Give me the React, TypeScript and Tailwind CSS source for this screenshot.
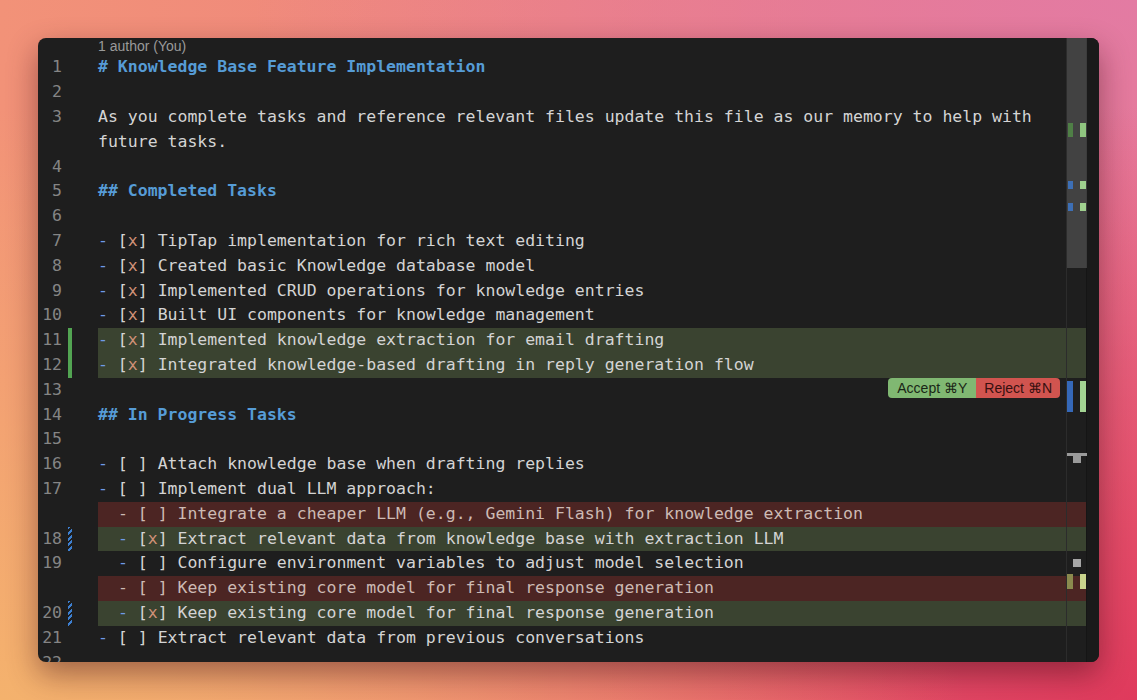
import type { ReactNode } from "react";

type Kind = "add" | "del" | undefined;

type Row = {
  n?: number;
  kind?: Kind;
  gutter?: "green" | "hatch";
  body?: ReactNode;
  actions?: boolean;
};

function Heading({ text }: { text: string }) {
  return <span className="font-bold text-[#569cd6]">{text}</span>;
}

function Task({
  text,
  done,
  indent = 0,
  removed,
}: {
  text: string;
  done?: boolean;
  indent?: number;
  removed?: boolean;
}) {
  const pad = " ".repeat(indent);
  if (removed) {
    return (
      <span className="text-[#cdbab4]">
        {pad}- [{done ? "x" : " "}] {text}
      </span>
    );
  }
  return (
    <span>
      {pad}
      <span className="text-[#6f9be8]">-</span> [
      {done ? <span className="text-[#ce9178]">x</span> : " "}] {text}
    </span>
  );
}

const rows: Row[] = [
  { n: 1, body: <Heading text="# Knowledge Base Feature Implementation" /> },
  { n: 2 },
  {
    n: 3,
    body: "As you complete tasks and reference relevant files update this file as our memory to help with",
  },
  { body: "future tasks." },
  { n: 4 },
  { n: 5, body: <Heading text="## Completed Tasks" /> },
  { n: 6 },
  { n: 7, body: <Task done text="TipTap implementation for rich text editing" /> },
  { n: 8, body: <Task done text="Created basic Knowledge database model" /> },
  { n: 9, body: <Task done text="Implemented CRUD operations for knowledge entries" /> },
  { n: 10, body: <Task done text="Built UI components for knowledge management" /> },
  {
    n: 11,
    kind: "add",
    gutter: "green",
    body: <Task done text="Implemented knowledge extraction for email drafting" />,
  },
  {
    n: 12,
    kind: "add",
    gutter: "green",
    body: <Task done text="Integrated knowledge-based drafting in reply generation flow" />,
  },
  { n: 13, actions: true },
  { n: 14, body: <Heading text="## In Progress Tasks" /> },
  { n: 15 },
  { n: 16, body: <Task text="Attach knowledge base when drafting replies" /> },
  { n: 17, body: <Task text="Implement dual LLM approach:" /> },
  {
    kind: "del",
    body: (
      <Task
        removed
        indent={2}
        text="Integrate a cheaper LLM (e.g., Gemini Flash) for knowledge extraction"
      />
    ),
  },
  {
    n: 18,
    kind: "add",
    gutter: "hatch",
    body: <Task done indent={2} text="Extract relevant data from knowledge base with extraction LLM" />,
  },
  {
    n: 19,
    body: <Task indent={2} text="Configure environment variables to adjust model selection" />,
  },
  {
    kind: "del",
    body: <Task removed indent={2} text="Keep existing core model for final response generation" />,
  },
  {
    n: 20,
    kind: "add",
    gutter: "hatch",
    body: <Task done indent={2} text="Keep existing core model for final response generation" />,
  },
  { n: 21, body: <Task text="Extract relevant data from previous conversations" /> },
  { n: 22 },
];

function AcceptReject() {
  return (
    <div className="flex h-[20px] overflow-hidden rounded-[4px] font-['Liberation_Sans',sans-serif] text-[14px] leading-[20px]">
      <span className="bg-[#80b872] px-[9px] text-[#1a2616]">Accept ⌘Y</span>
      <span className="bg-[#d1544f] px-[8px] text-[#361010]">Reject ⌘N</span>
    </div>
  );
}

function CodeRow({ row }: { row: Row }) {
  const bg =
    row.kind === "add" ? "bg-[#3a4330]" : row.kind === "del" ? "bg-[#4c2523]" : "";
  return (
    <div className="flex h-[24.8px] shrink-0">
      <div className="w-[24px] shrink-0 text-right text-[#858585]">{row.n ?? ""}</div>
      <div className="w-[36px] shrink-0 pl-[6px]">
        {row.gutter === "green" && <div className="h-full w-[4px] bg-[#52a452]" />}
        {row.gutter === "hatch" && (
          <div className="h-full w-[4px] bg-[image:repeating-linear-gradient(135deg,#3d7fd0_0px,#3d7fd0_2px,transparent_2px,transparent_4px)]" />
        )}
      </div>
      <div className={`flex-1 whitespace-pre ${bg}`}>
        {row.actions ? (
          <div className="flex justify-end pr-[26px]">
            <AcceptReject />
          </div>
        ) : (
          row.body ?? ""
        )}
      </div>
    </div>
  );
}

// overview ruler: slider + change marks, drawn as one small picture
function Ruler() {
  return (
    <div className="absolute top-0 right-0 bottom-0 w-[20px] border-l border-[#2c2c2c]">
      <svg width="20" height="624" viewBox="0 0 20 624" className="block">
        <rect x="0" y="0" width="20" height="230" fill="#797979" fillOpacity="0.4" />
        <rect x="1" y="85" width="5" height="14" fill="#4f7f46" />
        <rect x="13" y="85" width="6" height="14" fill="#8fc57f" />
        <rect x="1" y="143" width="5" height="8" fill="#3d6fb5" />
        <rect x="13" y="143" width="6" height="8" fill="#9fd08e" />
        <rect x="1" y="165" width="5" height="8" fill="#3d6fb5" />
        <rect x="13" y="165" width="6" height="8" fill="#9fd08e" />
        <rect x="0" y="343" width="6" height="31" fill="#3568b8" />
        <rect x="13" y="343" width="6" height="31" fill="#a3d493" />
        <rect x="0" y="415" width="20" height="3" fill="#9a9a9a" />
        <rect x="6" y="418" width="8" height="7" fill="#9a9a9a" />
        <rect x="6" y="521" width="8" height="8" fill="#a6a6a6" />
        <rect x="0" y="536" width="6" height="15" fill="#8a8a4e" />
        <rect x="13" y="536" width="6" height="15" fill="#c9d48c" />
      </svg>
    </div>
  );
}

export default function App() {
  return (
    <div className="h-[700px] w-[1137px] bg-[image:radial-gradient(ellipse_at_0%_100%,#f4b26d_0%,transparent_60%),radial-gradient(ellipse_at_100%_100%,#df3a5c_0%,transparent_60%),radial-gradient(ellipse_at_100%_0%,#e37ba3_0%,transparent_55%),linear-gradient(90deg,#f29278,#ea7484)] p-[38px]">
      <div className="flex h-full overflow-hidden rounded-lg bg-[#1e1e1e] shadow-[0_12px_30px_rgba(60,10,20,0.45)]">
        {/* Editor */}
        <div className="relative flex min-w-0 flex-1 flex-col font-['DejaVu_Sans_Mono',monospace] text-[16.5px] leading-[24.8px] text-[#d4d4d4]">
          <div className="h-[17.4px] shrink-0 pl-[60px] font-['Liberation_Sans',sans-serif] text-[14px] leading-[17.4px] text-[#9a9a9a]">
            1 author (You)
          </div>
          {rows.map((row, i) => (
            <CodeRow key={i} row={row} />
          ))}
          <Ruler />
        </div>
        {/* Right strip */}
        <div className="w-[13px] shrink-0 border-l border-[#151515] bg-[#1a1a1a]" />
      </div>
    </div>
  );
}
